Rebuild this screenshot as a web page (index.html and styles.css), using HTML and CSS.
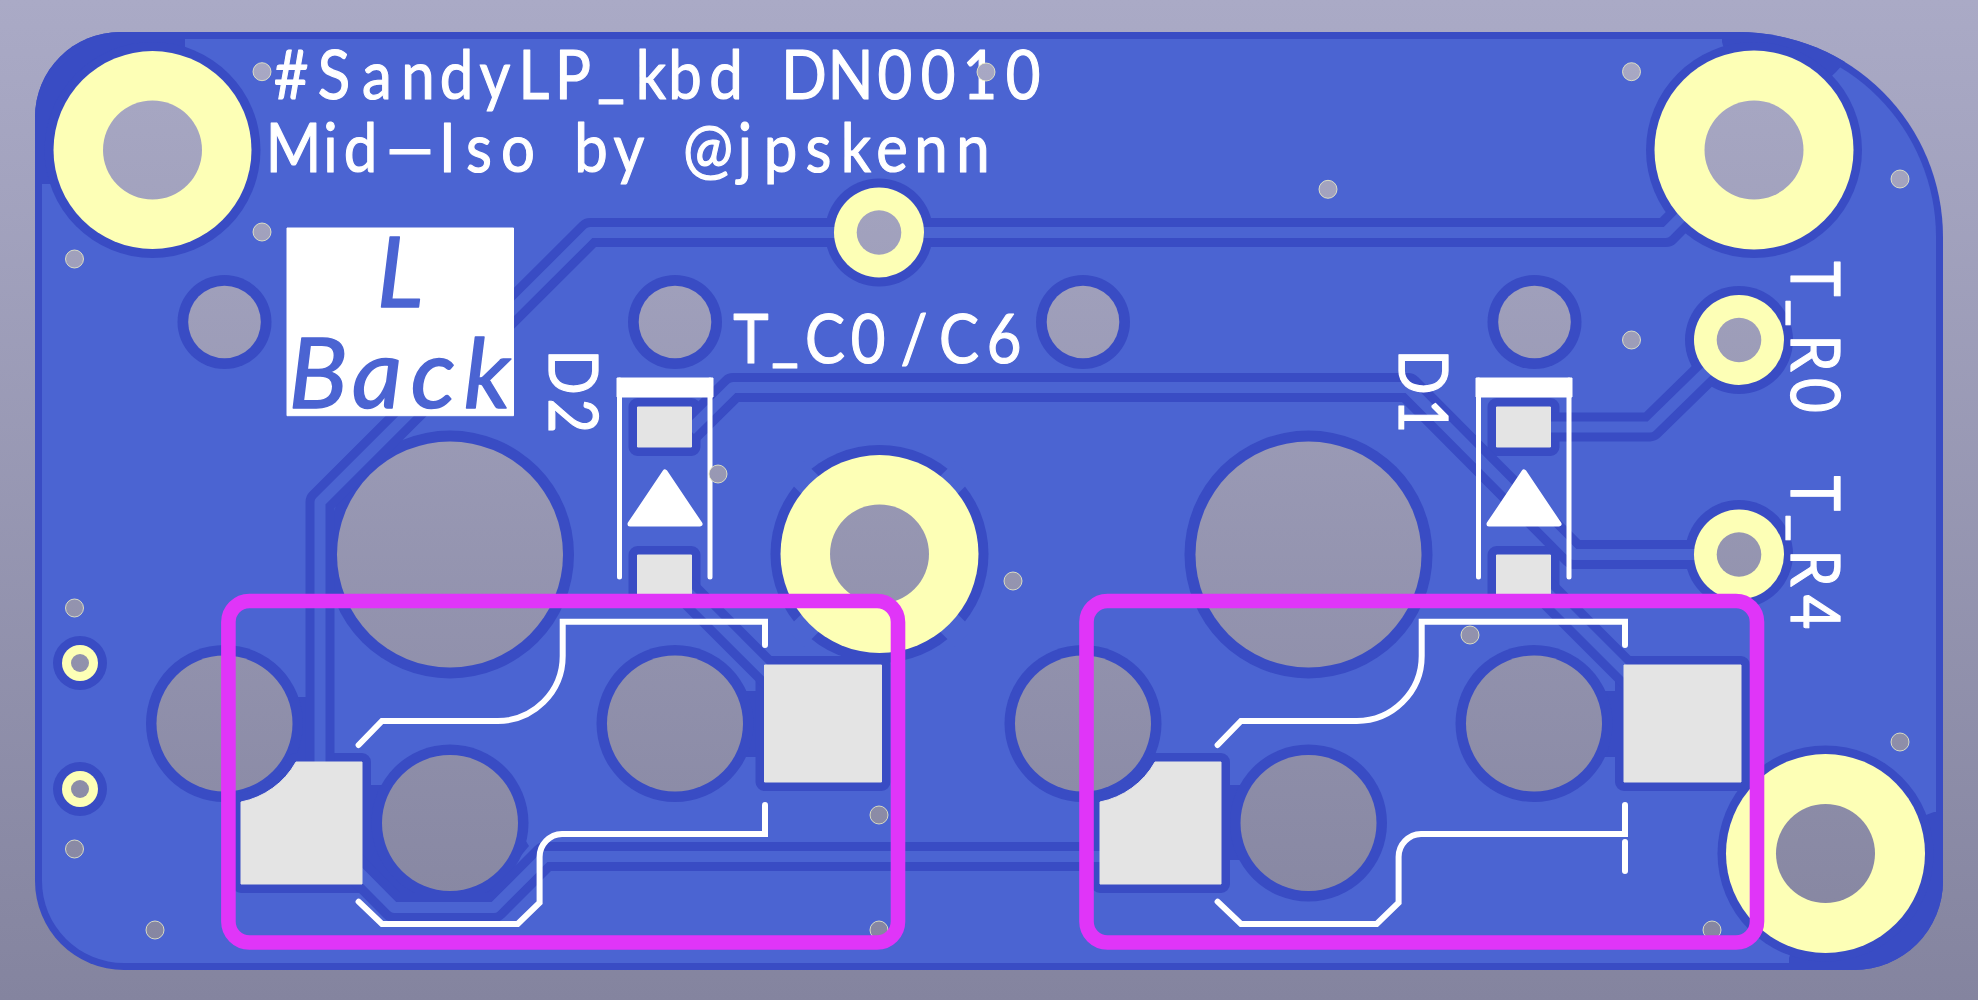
FILE: index.html
```html
<!DOCTYPE html>
<html lang="en">
<head>
<meta charset="utf-8">
<title>SandyLP kbd DN0010 PCB</title>
<link rel="stylesheet" href="styles.css">
</head>
<body>
<svg class="pcb" viewBox="0 0 1978 1000" width="1978" height="1000" xmlns="http://www.w3.org/2000/svg">
  <defs>
    <linearGradient id="bg" gradientUnits="userSpaceOnUse" x1="0" y1="0" x2="0" y2="1000">
      <stop offset="0" stop-color="#aaaac6"/>
      <stop offset="1" stop-color="#84849f"/>
    </linearGradient>
    <clipPath id="boardclip">
      <path d="M120,32H1738A205,205 0 0 1 1943,237V881A89,89 0 0 1 1854,970H124A89,89 0 0 1 35,881V117A85,85 0 0 1 120,32Z"/>
    </clipPath>
  </defs>

  <rect x="0" y="0" width="1978" height="1000" fill="url(#bg)"/>

  <!-- board -->
  <path class="dark" d="M120,32H1738A205,205 0 0 1 1943,237V881A89,89 0 0 1 1854,970H124A89,89 0 0 1 35,881V117A85,85 0 0 1 120,32Z"/>
  <path class="pour" d="M120,39H1738A198,198 0 0 1 1936,237V881A82,82 0 0 1 1854,963H124A82,82 0 0 1 42,881V117A78,78 0 0 1 120,39Z"/>

  <!-- isolated copper wedges in the corners and between pads -->
  <g class="dark" clip-path="url(#boardclip)">
    <path d="M20,20H185V48L152,150L50,184H20Z"/>
    <path d="M1722,20V42L1754,150L1836,72L1856,50L1800,20Z"/>
    <path d="M1960,812H1934L1825,853L1789,958V980H1960Z"/>
    <rect x="290" y="697" width="25" height="73"/>
    <rect x="745" y="691" width="16" height="66"/>
    <rect x="1604" y="691" width="16" height="66"/>
    <rect x="360" y="785" width="26" height="100"/>
    <rect x="1219" y="785" width="26" height="75"/>
    <path d="M364,872L394,902H482L529,846L500,800H400Z"/>
  </g>

  <!-- clearance rings -->
  <g class="dark">
    <circle cx="152.5" cy="150" r="108"/>
    <circle cx="1754" cy="150" r="108"/>
    <circle cx="1825.5" cy="853.5" r="108"/>
    <circle cx="879.5" cy="554" r="109"/>
    <circle cx="879" cy="232.5" r="54"/>
    <circle cx="1739" cy="340" r="54"/>
    <circle cx="1739" cy="554" r="54"/>
    <circle cx="80" cy="663" r="27"/>
    <circle cx="80" cy="789" r="27"/>
    <circle cx="224.5" cy="322" r="47"/>
    <circle cx="675" cy="322" r="47"/>
    <circle cx="1083" cy="322" r="47"/>
    <circle cx="1534.5" cy="322" r="47"/>
    <circle cx="450" cy="554.5" r="124"/>
    <circle cx="1308.5" cy="554.5" r="124"/>
    <circle cx="224.5" cy="723.5" r="78.5"/>
    <circle cx="450" cy="823" r="78.5"/>
    <circle cx="675" cy="723.5" r="78.5"/>
    <circle cx="1083" cy="723.5" r="78.5"/>
    <circle cx="1534" cy="723.5" r="78.5"/>
    <circle cx="1308.5" cy="823" r="78.5"/>
  </g>
  <g class="padring">
    <path d="M296,762H362V884H241V802A81,81 0 0 0 296,762Z"/>
    <path d="M1155,762H1221V884H1100V802A81,81 0 0 0 1155,762Z"/>
    <rect x="764.5" y="665" width="117" height="117"/>
    <rect x="1624" y="665" width="117" height="117"/>
    <rect x="637.5" y="407" width="54" height="40"/>
    <rect x="637.5" y="555" width="54" height="40"/>
    <rect x="1496.5" y="407" width="54" height="40"/>
    <rect x="1496.5" y="555" width="54" height="40"/>
  </g>

  <!-- tracks: clearance, then copper -->
  <g class="trackedge">
    <path d="M320,765V502L590,232.5H1666L1710,188"/>
    <path d="M690,430L733,387.5H1408L1574,554.5H1739"/>
    <path d="M1523,427H1650L1739,340"/>
    <path d="M670,575L795,700"/>
    <path d="M1529,575L1654,700"/>
    <path d="M1140,856.5H545L494,907.5H394L340,853"/>
  </g>
  <g class="spokes">
    <path d="M795,470L964,638"/>
    <path d="M964,470L795,638"/>
  </g>
  <g class="track">
    <path d="M320,765V502L590,232.5H1666L1710,188"/>
    <path d="M690,430L733,387.5H1408L1574,554.5H1739"/>
    <path d="M1523,427H1650L1739,340"/>
    <path d="M670,575L795,700"/>
    <path d="M1529,575L1654,700"/>
    <path d="M1140,856.5H545L494,907.5H394L340,853"/>
  </g>

  <!-- plated pads -->
  <g class="annular">
    <circle cx="152.5" cy="150" r="99"/>
    <circle cx="1754" cy="150" r="99.5"/>
    <circle cx="1825.5" cy="853.5" r="99.5"/>
    <circle cx="879.5" cy="554" r="99"/>
    <circle cx="879" cy="232.5" r="45"/>
    <circle cx="1739" cy="340" r="45"/>
    <circle cx="1739" cy="554.5" r="45"/>
    <circle cx="80" cy="663" r="18"/>
    <circle cx="80" cy="789" r="18"/>
  </g>

  <!-- drills: the background shows through -->
  <g fill="url(#bg)">
    <circle cx="152.5" cy="150" r="49.5"/>
    <circle cx="1754" cy="150" r="49.5"/>
    <circle cx="1825.5" cy="853.5" r="49.5"/>
    <circle cx="879.5" cy="554" r="49.5"/>
    <circle cx="879" cy="232.5" r="22.3"/>
    <circle cx="1739" cy="340" r="22.3"/>
    <circle cx="1739" cy="554.5" r="22.3"/>
    <circle cx="80" cy="663" r="9"/>
    <circle cx="80" cy="789" r="9"/>
    <circle cx="224.5" cy="322" r="36.3"/>
    <circle cx="675" cy="322" r="36.3"/>
    <circle cx="1083" cy="322" r="36.3"/>
    <circle cx="1534.5" cy="322" r="36.3"/>
    <circle cx="450" cy="554.5" r="113"/>
    <circle cx="1308.5" cy="554.5" r="113"/>
    <circle cx="224.5" cy="723.5" r="68"/>
    <circle cx="450" cy="823" r="68"/>
    <circle cx="675" cy="723.5" r="68"/>
    <circle cx="1083" cy="723.5" r="68"/>
    <circle cx="1534" cy="723.5" r="68"/>
    <circle cx="1308.5" cy="823" r="68"/>
  </g>

  <!-- SMD pads -->
  <g class="pad">
    <path d="M296,762H362V884H241V802A81,81 0 0 0 296,762Z"/>
    <path d="M1155,762H1221V884H1100V802A81,81 0 0 0 1155,762Z"/>
    <rect x="764.5" y="665" width="117" height="117"/>
    <rect x="1624" y="665" width="117" height="117"/>
    <rect x="637.5" y="407" width="54" height="40"/>
    <rect x="637.5" y="555" width="54" height="40"/>
    <rect x="1496.5" y="407" width="54" height="40"/>
    <rect x="1496.5" y="555" width="54" height="40"/>
  </g>

  <!-- silkscreen -->
  <g class="silk">
    <path d="M358.6,745L382,721H497A65,65 0 0 0 562.7,656V621.7H765V645"/>
    <path d="M765,805V834H562A23,23 0 0 0 539.6,857V902.7L517.7,924H382L358.6,901.7"/>
    <path d="M1217.6,745L1241,721H1356A65,65 0 0 0 1421.7,656V621.7H1625V645"/>
    <path d="M1625,805V834H1421A23,23 0 0 0 1398.6,857V902.7L1376.7,924H1241L1217.6,901.7"/>
    <path d="M1625,842V871"/>
  </g>
  <g class="silkthin">
    <path d="M619.5,380V577"/>
    <path d="M710,380V577"/>
    <path d="M1478.5,380V577"/>
    <path d="M1569,380V577"/>
  </g>
  <g class="silkfill">
    <rect x="617" y="378" width="96" height="19"/>
    <rect x="1476" y="378" width="96" height="19"/>
    <path d="M665,472L700,524H630Z"/>
    <path d="M1524,472L1559,524H1489Z"/>
    <rect x="287" y="228" width="226.5" height="187.7"/>
  </g>

  <text class="legend" transform="scale(.88 1)" y="99" x="330.7 379.5 428.4 475 518.8 562.5 606.8 651.1 694.3 739.8 778.4 825 869.3 913.6 966.6 1017 1065.9 1113.6 1162.5">#SandyLP<tspan dy="-5">_</tspan><tspan dy="5">kbd DN0010</tspan></text>
  <text class="legend" transform="scale(.88 1)" y="171.7" x="333.5 375.5 409.7 465.9 508.4 544.3 588.6 630.7 671.6 714.8 759.1 804.5 846.6 887 930.1 972.7 1013.6 1058 1105.7">Mid—Iso by @jpskenn</text>
  <text class="legend" transform="scale(.88 1)" y="362.7" x="853.4 892 937.5 986.4 1038.6 1089.8 1140.9">T<tspan dy="-5">_</tspan><tspan dy="5">C0/C6</tspan></text>
  <text class="legend" transform="translate(1791 0) rotate(90) scale(.88 1)" y="0" x="317 355.7 401.1 449.4">T<tspan dy="-5">_</tspan><tspan dy="5">R0</tspan></text>
  <text class="legend" transform="translate(1791 0) rotate(90) scale(.88 1)" y="0" x="560.8 600 645.5 695.5">T<tspan dy="-5">_</tspan><tspan dy="5">R4</tspan></text>
  <text class="legend" transform="translate(549 0) rotate(90) scale(.88 1)" y="0" x="422.7 472.7">D2</text>
  <text class="legend" transform="translate(1399 0) rotate(90) scale(.88 1)" y="0" x="422.7 472.7">D1</text>
  <text class="knockout" y="306.7" x="400">L</text>
  <text class="knockout" y="408" x="318 377 433 487">Back</text>

  <!-- vias -->
  <g fill="url(#bg)" class="via">
    <circle cx="262" cy="71.7" r="9"/>
    <circle cx="262" cy="232" r="9"/>
    <circle cx="74.5" cy="259" r="9"/>
    <circle cx="986" cy="72" r="9"/>
    <circle cx="718" cy="474" r="9"/>
    <circle cx="1328" cy="189.3" r="9"/>
    <circle cx="1631.5" cy="71.7" r="9"/>
    <circle cx="1900" cy="179" r="9"/>
    <circle cx="1631.5" cy="340" r="9"/>
    <circle cx="74.5" cy="608" r="9"/>
    <circle cx="74.5" cy="849" r="9"/>
    <circle cx="155" cy="930" r="9"/>
    <circle cx="1013" cy="581" r="9"/>
    <circle cx="879" cy="815" r="9"/>
    <circle cx="879" cy="930" r="9"/>
    <circle cx="1470" cy="635" r="9"/>
    <circle cx="1900" cy="742" r="9"/>
    <circle cx="1712" cy="930" r="9"/>
  </g>

  <!-- courtyard highlight -->
  <g class="court">
    <rect x="228.4" y="601" width="669.6" height="341.5" rx="21" ry="21"/>
    <rect x="1086.5" y="601" width="670.5" height="341.5" rx="21" ry="21"/>
  </g>
</svg>
</body>
</html>
```
FILE: styles.css
```css
html, body {
  margin: 0;
  padding: 0;
  background: #9898b2;
}
.pcb {
  display: block;
}
.dark { fill: #394cc4; }
.pour { fill: #4b64d2; }
.padring {
  fill: #394cc4;
  stroke: #394cc4;
  stroke-width: 18;
  stroke-linejoin: round;
}
.trackedge, .track, .spokes {
  fill: none;
  stroke-linejoin: round;
}
.trackedge { stroke: #394cc4; stroke-width: 29; }
.track { stroke: #4b64d2; stroke-width: 11; }
.spokes { stroke: #4b64d2; stroke-width: 25; }
.annular { fill: #fdffb6; }
.pad {
  fill: #e4e4e4;
  stroke: #e4e4e4;
  stroke-width: 1;
  stroke-linejoin: round;
}
.silk {
  fill: none;
  stroke: #fff;
  stroke-width: 6;
  stroke-linecap: round;
  stroke-linejoin: miter;
}
.silkthin {
  fill: none;
  stroke: #fff;
  stroke-width: 5;
  stroke-linecap: round;
}
.silkfill {
  fill: #fff;
  stroke: #fff;
  stroke-width: 1;
  stroke-linejoin: round;
}
.silkfill path { stroke-width: 5; }
.legend {
  font-family: "Lato", "Liberation Sans", sans-serif;
  font-size: 68px;
  fill: #fff;
  stroke: #fff;
  stroke-width: 1.2;
  stroke-linejoin: round;
  text-anchor: middle;
}
.knockout {
  font-family: "Lato", "Liberation Sans", sans-serif;
  font-size: 98px;
  font-style: italic;
  fill: #4b64d2;
  stroke: #4b64d2;
  stroke-width: 1.5;
  stroke-linejoin: round;
  text-anchor: middle;
}
.via {
  stroke: #f2f2c4;
  stroke-width: 0.8;
}
.court {
  fill: none;
  stroke: #e035f8;
  stroke-width: 14.6;
}
```
